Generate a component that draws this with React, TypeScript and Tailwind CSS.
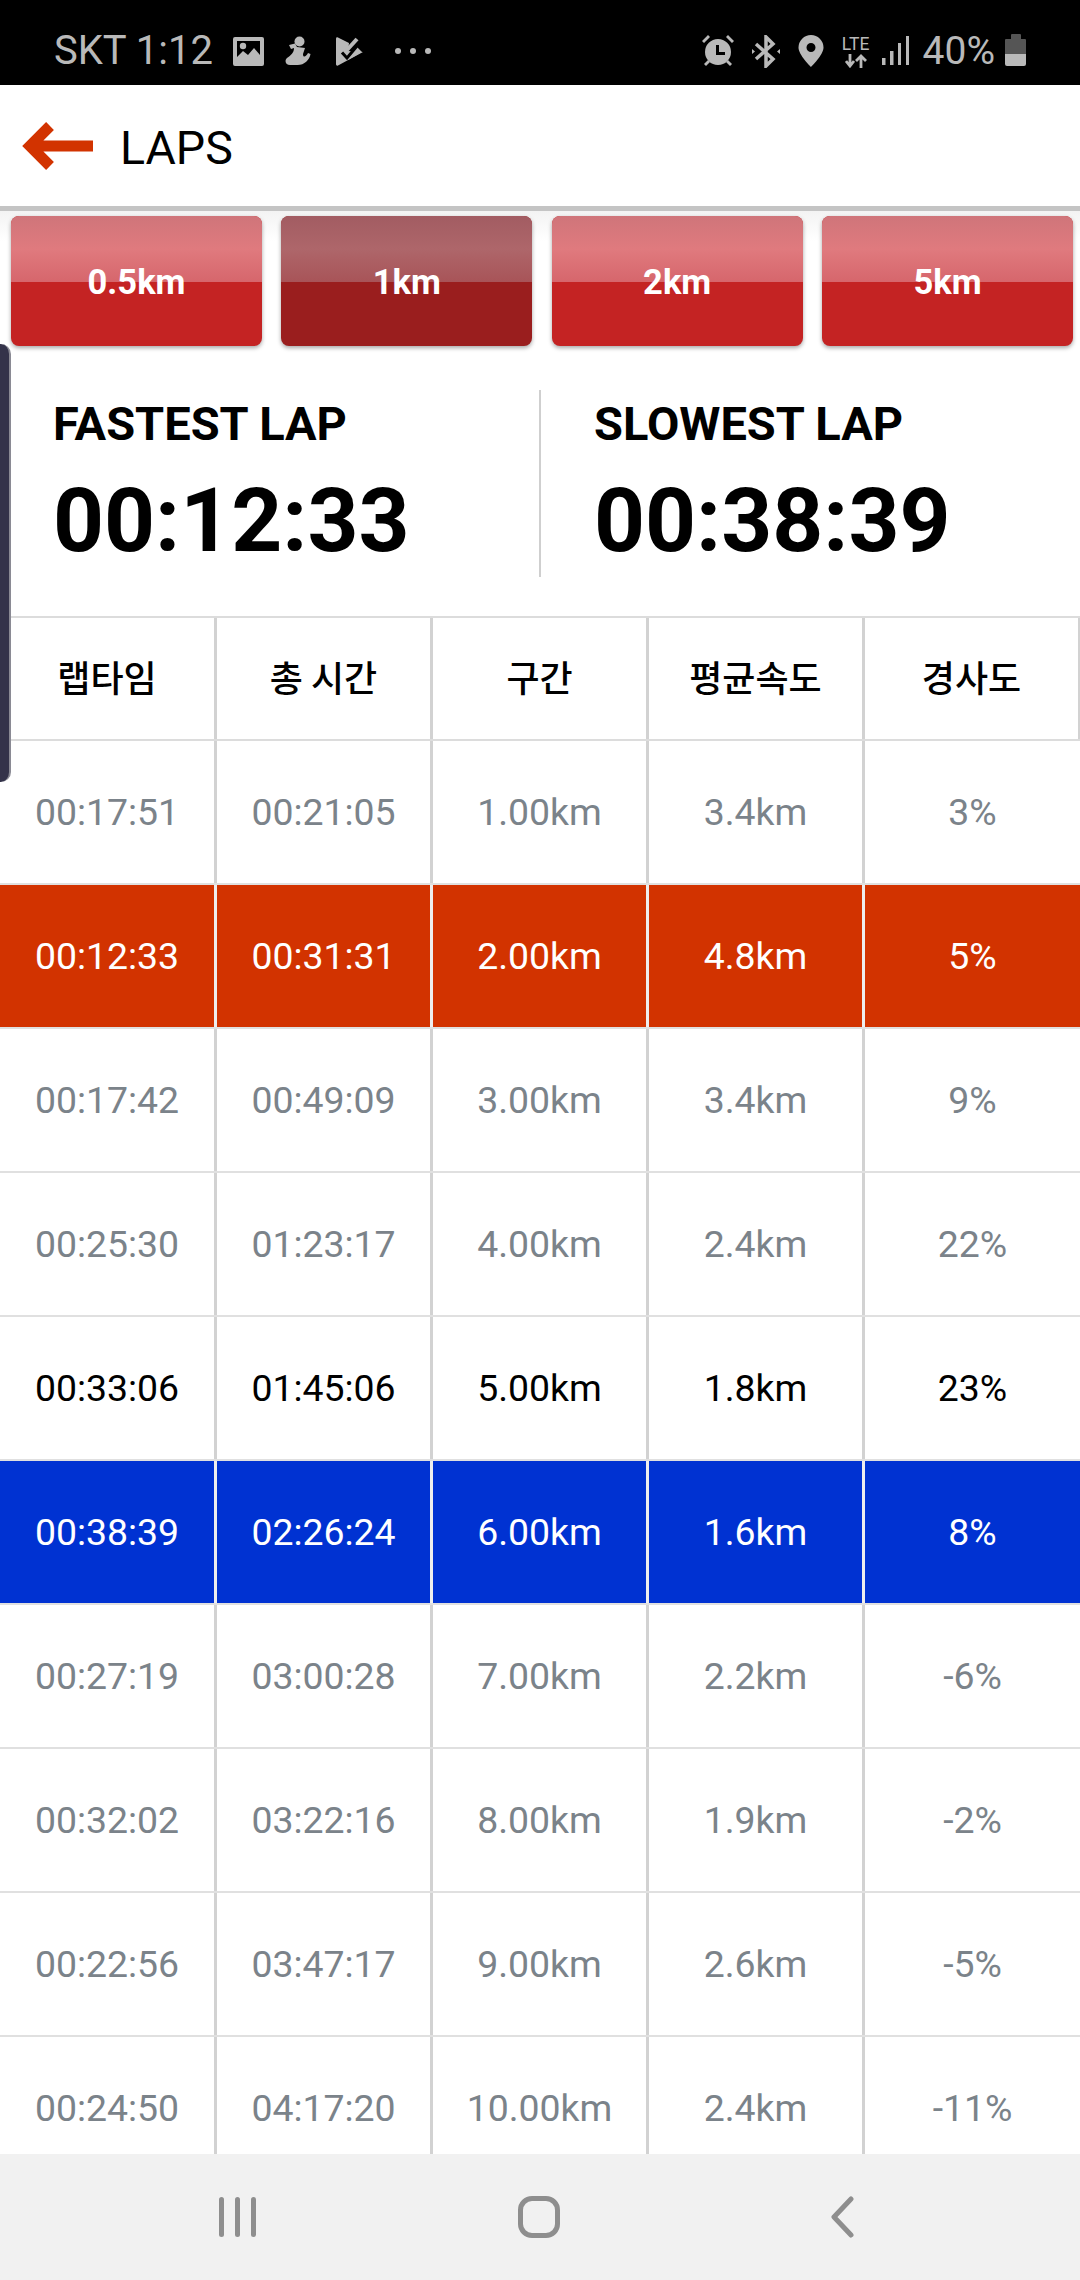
import React from "react";

type Row = { c: string[]; t: "grey" | "black" | "red" | "blue" };
const rows: Row[] = [
  { c: ["00:17:51", "00:21:05", "1.00km", "3.4km", "3%"], t: "grey" },
  { c: ["00:12:33", "00:31:31", "2.00km", "4.8km", "5%"], t: "red" },
  { c: ["00:17:42", "00:49:09", "3.00km", "3.4km", "9%"], t: "grey" },
  { c: ["00:25:30", "01:23:17", "4.00km", "2.4km", "22%"], t: "grey" },
  { c: ["00:33:06", "01:45:06", "5.00km", "1.8km", "23%"], t: "black" },
  { c: ["00:38:39", "02:26:24", "6.00km", "1.6km", "8%"], t: "blue" },
  { c: ["00:27:19", "03:00:28", "7.00km", "2.2km", "-6%"], t: "grey" },
  { c: ["00:32:02", "03:22:16", "8.00km", "1.9km", "-2%"], t: "grey" },
  { c: ["00:22:56", "03:47:17", "9.00km", "2.6km", "-5%"], t: "grey" },
  { c: ["00:24:50", "04:17:20", "10.00km", "2.4km", "-11%"], t: "grey" },
];

const rowStyle = {
  grey: "bg-white text-[#7b838a]",
  black: "bg-white text-black",
  red: "bg-[#d23300] text-white",
  blue: "bg-[#0032d2] text-white",
};

const colWidth = ["w-[217px]", "w-[216px]", "w-[216px]", "w-[216px]", "w-[215px]"];

function Btn({ label, active }: { label: string; active?: boolean }) {
  return (
    <div
      className={
        "relative h-[130px] w-[251px] overflow-hidden rounded-[8px] shadow-[0_2px_4px_rgba(0,0,0,0.35)] " +
        (active ? "bg-[#9a1e1e]" : "bg-[#c42323]")
      }
    >
      <div
        className={
          "h-[66px] " +
          (active
            ? "bg-[linear-gradient(#a25c62,#ae666a_50%,#a85458)]"
            : "bg-[linear-gradient(#cf757a,#e07a7e_50%,#d6666c)]")
        }
      />
      <div className="absolute inset-0 flex items-center justify-center pt-[3px] text-[34.500px] font-bold text-white">
        {label}
      </div>
    </div>
  );
}

function StatusLeftIcons() {
  return (
    <div className="ml-[20px] flex items-center">
      <svg width="31" height="29" viewBox="0 0 31 29" fill="#b9b9b9">
        <path fillRule="evenodd" d="M2 0h27a2 2 0 0 1 2 2v25a2 2 0 0 1-2 2H2a2 2 0 0 1-2-2V2a2 2 0 0 1 2-2zM4 4v16l6-6 5 4 6-7 6 7V4z" />
        <circle cx="10" cy="9" r="3.200" />
      </svg>
      <svg className="ml-[21px]" width="26" height="30" viewBox="0 0 26 30" fill="#b9b9b9">
        <circle cx="14.500" cy="5.500" r="5" />
        <path d="M4 9l6-1.500 2 3.500 8 1-2 6c0 4 3 3 5-1l2.500 1c-1 6-6 11-13 11H5c-4 0-6-4-3-7 4-3 7-5 7-10l-3 1z" />
      </svg>
      <svg className="ml-[25px]" width="27" height="29" viewBox="0 0 27 29" fill="#b9b9b9">
        <path d="M0 2c0-2 1-2 2-1.500L13 6l-1 8 15 1L2 28.500c-1 .5-2 0-2-1.500z" />
        <path d="M5 15l6 6 10-11 5 5-14 8z" />
        <path d="M6 15.500l5 5.500 10-12" fill="none" stroke="#000" strokeWidth="3" />
        <path d="M11 13l10-11" fill="none" stroke="#b9b9b9" strokeWidth="4" />
      </svg>
      <div className="ml-[32px] flex gap-[9px]">
        <div className="h-[6px] w-[6px] rounded-full bg-[#b9b9b9]" />
        <div className="h-[6px] w-[6px] rounded-full bg-[#b9b9b9]" />
        <div className="h-[6px] w-[6px] rounded-full bg-[#b9b9b9]" />
      </div>
    </div>
  );
}

function StatusRight() {
  return (
    <div className="flex items-center">
      <svg width="32" height="32" viewBox="0 0 32 32" fill="#b9b9b9">
        <path fillRule="evenodd" d="M16 4a13 13 0 1 1 0 26 13 13 0 0 1 0-26zM14 10v10h9v-3h-6v-7z" />
        <path d="M0 6l6-6 2 2-6 6zM32 6l-6-6-2 2 6 6zM2 29l4-4 2 2-4 4zM30 29l-4-4-2 2 4 4z" />
      </svg>
      <svg className="ml-[18px]" width="28" height="33" viewBox="0 0 28 33" fill="none" stroke="#b9b9b9" strokeWidth="3.500">
        <path d="M4 9l17 15-7 7V2l7 7L4 24" />
        <path d="M0 14l3 2.500L0 19zM28 14l-3 2.500 3 2.500z" fill="#b9b9b9" stroke="none" />
      </svg>
      <svg className="ml-[18px]" width="26" height="32" viewBox="0 0 26 32" fill="#b9b9b9">
        <path fillRule="evenodd" d="M13 0a12.500 12.500 0 0 1 12.500 12.500C25.500 20 13 32 13 32S.5 20 .5 12.500A12.500 12.500 0 0 1 13 0zm0 8a4.500 4.500 0 1 0 0 9 4.500 4.500 0 0 0 0-9z" />
      </svg>
      <div className="ml-[17px] flex w-[30px] flex-col items-center">
        <span className="text-[17.500px] leading-[18px] text-[#b9b9b9]">LTE</span>
        <svg className="mt-[1px]" width="22" height="14" viewBox="0 0 22 14" fill="none" stroke="#b9b9b9" strokeWidth="2.800">
          <path d="M5 0v12M1 7l4 5 4-5M16 14V2M11 7l5-5 5 5" />
        </svg>
      </div>
      <svg className="ml-[11px]" width="27" height="30" viewBox="0 0 27 30" fill="#b9b9b9">
        <rect x="0" y="22" width="3.500" height="7" />
        <rect x="8" y="15" width="3.500" height="14" />
        <rect x="16" y="7" width="3" height="22" />
        <rect x="24" y="0" width="3" height="29" />
      </svg>
      <span className="ml-[14px] text-[39px] leading-none text-[#b9b9b9]">40%</span>
      <div className="ml-[10px] flex h-[32px] w-[21px] -translate-y-[1px] flex-col">
        <div className="mx-auto h-[5px] w-[10px] rounded-t-[1px] bg-[#555]" />
        <div className="h-[15px] rounded-t-[1px] bg-[#555]" />
        <div className="h-[12px] rounded-b-[2px] bg-[#b9b9b9]" />
      </div>
    </div>
  );
}

function Cell({ children, index, className }: { children: React.ReactNode; index: number; className?: string }) {
  return (
    <div
      className={
        "flex h-full items-center justify-center " +
        colWidth[index] +
        " " +
        (index < 4 ? "border-r-[3px] " : "") +
        (className ?? "")
      }
    >
      {children}
    </div>
  );
}

export default function App() {
  return (
    <div className="relative flex h-[2280px] w-[1080px] flex-col overflow-hidden bg-white font-['Roboto',sans-serif]">
      <div className="flex h-[85px] shrink-0 items-center justify-between bg-black pt-[17px] pr-[54px] pl-[54px]">
        <div className="flex items-center">
          <span className="text-[40px] leading-none text-[#b9b9b9]">SKT 1:12</span>
          <StatusLeftIcons />
        </div>
        <StatusRight />
      </div>

      <div className="flex h-[121px] shrink-0 items-center bg-white pl-[22px]">
        <svg width="71" height="50" viewBox="0 0 71 50" fill="none" stroke="#d23300" strokeWidth="11">
          <path d="M71 25H8M28 5L8 25l20 20" />
        </svg>
        <span className="ml-[27px] translate-y-[3px] text-[46.500px] leading-none text-black">LAPS</span>
      </div>
      <div className="h-[5px] shrink-0 bg-[#c4c4c4]" />

      <div className="flex h-[142px] shrink-0 justify-between bg-[linear-gradient(#f3f3f3,#ffffff_30px)] pt-[5px] pr-[7px] pl-[11px]">
        <Btn label="0.5km" />
        <Btn label="1km" active />
        <Btn label="2km" />
        <Btn label="5km" />
      </div>

      <div className="flex h-[263px] shrink-0 items-center pb-[3px]">
        <div className="flex w-[539px] flex-col pl-[53px]">
          <div className="text-[47px] leading-[56px] font-bold text-black">FASTEST LAP</div>
          <div className="mt-[19px] text-[89px] leading-[100px] font-bold text-black">00:12:33</div>
        </div>
        <div className="h-[187px] w-[2px] bg-[#cfcfcf]" />
        <div className="flex flex-col pl-[53px]">
          <div className="text-[47px] leading-[56px] font-bold text-black">SLOWEST LAP</div>
          <div className="mt-[19px] text-[89px] leading-[100px] font-bold text-black">00:38:39</div>
        </div>
      </div>

      <div className="flex-1 overflow-hidden">
        <div className="flex h-[125px] border-y-2 border-[#dcdcdc] text-[36px] font-medium text-black">
          {["랩타임", "총 시간", "구간", "평균속도", "경사도"].map((h, i) => (
            <Cell key={h} index={i} className={"border-[#d2d2d2] pb-[5px] font-['Noto_Sans_CJK_KR',sans-serif] " + (i === 4 ? "border-r-2" : "")}>
              {h}
            </Cell>
          ))}
        </div>
        {rows.map((r) => (
          <div key={r.c[0]} className={"flex h-[144px] border-b-2 border-[#e0e0e0] text-[37.400px] " + rowStyle[r.t]}>
            {r.c.map((v, i) => (
              <Cell key={i} index={i} className={r.t === "red" || r.t === "blue" ? "border-[#eeeeee]" : "border-[#d2d2d2]"}>
                {v}
              </Cell>
            ))}
          </div>
        ))}
      </div>

      <div className="flex h-[126px] shrink-0 items-center bg-[#f1f1f1] pl-[219px]">
        <div className="flex gap-[11px]">
          <div className="h-[40px] w-[5px] rounded-full bg-[#8e8e8e]" />
          <div className="h-[40px] w-[5px] rounded-full bg-[#8e8e8e]" />
          <div className="h-[40px] w-[5px] rounded-full bg-[#8e8e8e]" />
        </div>
        <div className="ml-[262px] h-[42px] w-[42px] rounded-[14px] border-[5px] border-[#8e8e8e]" />
        <svg className="ml-[270px]" width="24" height="42" viewBox="0 0 24 42" fill="none" stroke="#8e8e8e" strokeWidth="5" strokeLinecap="round" strokeLinejoin="round">
          <path d="M21 3L4 21l17 18" />
        </svg>
      </div>

      <div className="absolute top-[344px] left-0 h-[438px] w-[11px] rounded-r-[10px] border-r-2 border-[#8a8a94] bg-[#34334a]" />
    </div>
  );
}
